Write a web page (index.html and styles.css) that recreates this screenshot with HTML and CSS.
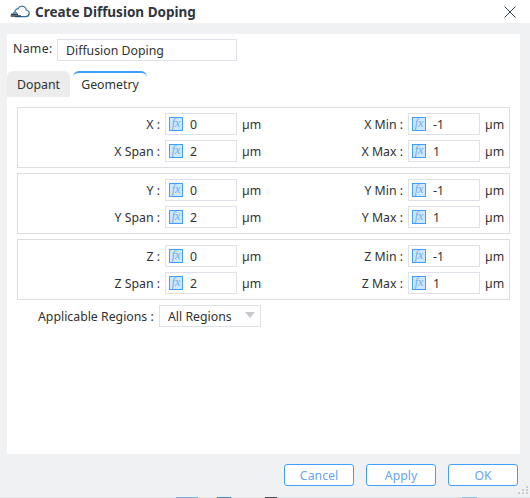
FILE: index.html
```html
<!DOCTYPE html>
<html lang="en">
<head>
  <meta charset="UTF-8">
  <title>Create Diffusion Doping</title>
  <link rel="stylesheet" href="styles.css">
</head>
<body>
  <div class="dialog">
    <div class="titlebar">
      <svg class="logo" viewBox="0 0 20 13" width="20" height="13">
        <path d="M5 7.5 C4.6 4.8 6.6 3.6 8 3.9 C9 1.2 12.8 0 15 2.4 C16 3.4 16.2 4.2 16.2 5 C18.4 5.2 19.4 6.9 19.2 8.6 C19 10.6 17.4 11.6 15.8 11.6 L5 11.6" fill="none" stroke="#2f6f9f" stroke-width="1.2"/>
        <path d="M1 9.2 H8 M0.6 11 H11" stroke="#2c3e50" stroke-width="1.6"/>
        <path d="M3 7.6 H7" stroke="#4a8fc0" stroke-width="1.2"/>
      </svg>
      <span class="title">Create Diffusion Doping</span>
      <svg class="close" viewBox="0 0 12 12" width="12" height="12">
        <path d="M0.5 0.5 L11.5 11.5 M11.5 0.5 L0.5 11.5" stroke="#3a4654" stroke-width="1"/>
      </svg>
    </div>

    <div class="panel">
      <div class="name-row">
        <label class="name-label">Name:</label>
        <div class="box name-box">Diffusion Doping</div>
      </div>

      <div class="tabs">
        <div class="tab">Dopant</div>
        <div class="tab active">Geometry</div>
      </div>

      <div class="group">
        <span class="lbl">X :</span>
        <div class="box num"><i class="fx">fx</i>0</div>
        <span class="unit">µm</span>
        <span class="lbl">X Min :</span>
        <div class="box num"><i class="fx">fx</i>-1</div>
        <span class="unit">µm</span>
        <span class="lbl">X Span :</span>
        <div class="box num"><i class="fx">fx</i>2</div>
        <span class="unit">µm</span>
        <span class="lbl">X Max :</span>
        <div class="box num"><i class="fx">fx</i>1</div>
        <span class="unit">µm</span>
      </div>

      <div class="group">
        <span class="lbl">Y :</span>
        <div class="box num"><i class="fx">fx</i>0</div>
        <span class="unit">µm</span>
        <span class="lbl">Y Min :</span>
        <div class="box num"><i class="fx">fx</i>-1</div>
        <span class="unit">µm</span>
        <span class="lbl">Y Span :</span>
        <div class="box num"><i class="fx">fx</i>2</div>
        <span class="unit">µm</span>
        <span class="lbl">Y Max :</span>
        <div class="box num"><i class="fx">fx</i>1</div>
        <span class="unit">µm</span>
      </div>

      <div class="group">
        <span class="lbl">Z :</span>
        <div class="box num"><i class="fx">fx</i>0</div>
        <span class="unit">µm</span>
        <span class="lbl">Z Min :</span>
        <div class="box num"><i class="fx">fx</i>-1</div>
        <span class="unit">µm</span>
        <span class="lbl">Z Span :</span>
        <div class="box num"><i class="fx">fx</i>2</div>
        <span class="unit">µm</span>
        <span class="lbl">Z Max :</span>
        <div class="box num"><i class="fx">fx</i>1</div>
        <span class="unit">µm</span>
      </div>

      <div class="regions-row">
        <span class="regions-label">Applicable Regions :</span>
        <div class="box select">All Regions<span class="caret"></span></div>
      </div>
    </div>

    <div class="footer">
      <button class="btn">Cancel</button>
      <button class="btn">Apply</button>
      <button class="btn">OK</button>
    </div>
    <svg class="grip" viewBox="0 0 12 8" width="12" height="8">
      <path d="M8 0h2v2H8z M4 3h2v2H4z M8 3h2v2H8z M0 6h2v2H0z M4 6h2v2H4z M8 6h2v2H8z" fill="#c9ccd0"/>
    </svg>
  </div>
  <div class="backdrop"></div>
</body>
</html>
```

FILE: styles.css
```css
* {
  box-sizing: border-box;
}
html, body {
  margin: 0;
  padding: 0;
}
body {
  width: 530px;
  height: 498px;
  overflow: hidden;
  background: #fff;
  font-family: "Noto Sans", "Open Sans", sans-serif;
  font-size: 12.3px;
  color: #303133;
}
.dialog {
  position: relative;
  height: 497px;
  background: #f0f1f3;
  display: flex;
  flex-direction: column;
}
.titlebar {
  height: 23px;
  background: #fff;
  display: flex;
  align-items: center;
  padding: 0 14px 0 10px;
  flex: none;
}
.logo {
  margin-right: 5px;
}
.title {
  font-size: 13.5px;
  font-weight: 700;
  color: #2f3640;
  flex: 1;
}
.panel {
  width: 513px;
  height: 420px;
  margin: 11px 0 0 7px;
  background: #fff;
  flex: none;
}
.box {
  border: 1px solid #dfe1e8;
  background: #fff;
  display: flex;
  align-items: center;
}
.name-row {
  display: flex;
  align-items: center;
  padding: 5px 0 0 6px;
}
.name-label {
  width: 44px;
  margin-top: -3px;
  letter-spacing: 0.3px;
}
.name-box {
  width: 180px;
  height: 22px;
  padding-left: 8px;
}
.tabs {
  display: flex;
  height: 26px;
  margin-top: 10px;
}
.tab {
  width: 63px;
  margin-right: 3px;
  background: #ececec;
  border-radius: 6px 6px 0 0;
  text-align: center;
  line-height: 27px;
}
.tab.active {
  width: 74px;
  background: #fff;
  border-top: 2px solid #409eff;
  line-height: 24px;
}
.group {
  width: 493px;
  height: 61px;
  margin: 10px 0 0 10px;
  border: 1px solid #dcdee2;
  padding: 5px 0 0 0;
  display: grid;
  grid-template-columns: 147px 72px 41px 130px 72px 1fr;
  grid-auto-rows: 22px;
  row-gap: 5px;
  align-items: center;
}
.group + .group {
  margin-top: 5px;
}
.lbl {
  text-align: right;
  padding-right: 5px;
  white-space: nowrap;
}
.unit {
  padding-left: 5px;
}
.num {
  height: 22px;
}
.fx {
  width: 14px;
  height: 14px;
  margin: 0 7px 0 3px;
  background: #cfe6ff;
  border: 1px solid #409eff;
  color: #6aaef0;
  font-family: "Liberation Serif", serif;
  font-size: 12px;
  line-height: 11px;
  text-align: center;
  flex: none;
}
.regions-row {
  display: flex;
  align-items: center;
  margin-top: 5px;
  padding-left: 31px;
}
.regions-label {
  width: 121px;
  white-space: nowrap;
}
.select {
  position: relative;
  width: 102px;
  height: 22px;
  padding-left: 8px;
}
.caret {
  position: absolute;
  right: 5px;
  top: 6px;
  border-left: 5px solid transparent;
  border-right: 5px solid transparent;
  border-top: 6px solid #c4c7cc;
}
.footer {
  display: flex;
  justify-content: flex-end;
  gap: 12px;
  padding: 10px 12px 0 0;
}
.btn {
  width: 70px;
  height: 22px;
  padding: 0;
  background: #fff;
  border: 1px solid #409eff;
  border-radius: 3px;
  color: #6aa5ee;
  font: inherit;
}
.grip {
  position: absolute;
  right: 0;
  bottom: 3px;
}
/* sliver of the window behind the dialog */
.backdrop {
  height: 1px;
  background: linear-gradient(to right,
    #e4e6e8 0 176px, #7ab0e0 176px 198px, #e4e6e8 198px 217px,
    #3a86d8 217px 231px, #e4e6e8 231px 265px, #44484c 265px 277px,
    #dbe3e8 277px 462px, #8fc0e8 462px 477px, #dbe3e8 477px);
}
```
